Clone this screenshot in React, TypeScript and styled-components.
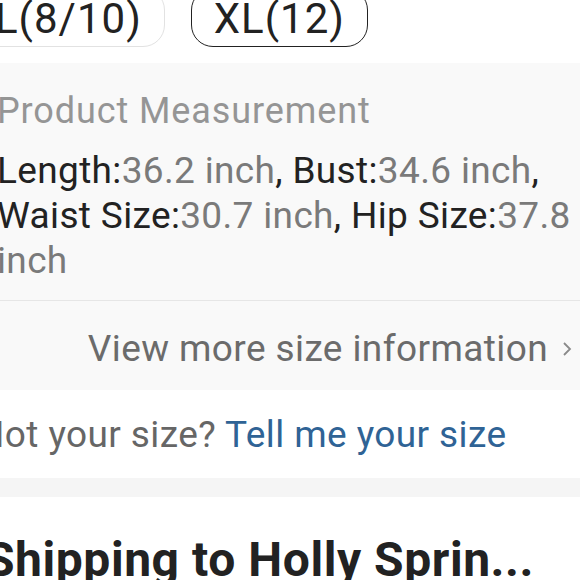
import React from "react";
import styled, { createGlobalStyle } from "styled-components";

const GlobalStyle = createGlobalStyle`
  html, body {
    margin: 0;
    padding: 0;
    background: #ffffff;
    overflow: hidden;
  }
  body {
    font-family: Roboto, "Noto Sans", Arial, sans-serif;
    -webkit-font-smoothing: antialiased;
  }
`;

const Page = styled.div`
  width: 620px;
  margin-left: -20px;
  margin-top: -12px;
  color: #222222;
`;

const ChipRow = styled.div`
  display: flex;
  gap: 26px;
  margin-left: -8px;
  height: 59px;
`;

const Chip = styled.div<{ $active?: boolean }>`
  box-sizing: border-box;
  height: 59px;
  padding: 3px 22px 0;
  display: flex;
  align-items: center;
  border-radius: 22px;
  border: ${({ $active }) => ($active ? "1.5px solid #222" : "1.5px solid #e2e2e2")};
  font-size: 42px;
  letter-spacing: 1px;
  line-height: 1;
  color: #222222;
`;

const Panel = styled.section`
  margin-top: 16px;
  background: #f9f9f9;
  padding-left: 17px;
  width: 583px;
`;

const Measure = styled.div`
  padding: 26px 0 17px;
  border-bottom: 1px solid #e6e6e6;
`;

const MeasureTitle = styled.div`
  font-size: 36px;
  letter-spacing: 0.9px;
  line-height: 44px;
  color: #959595;
  margin-bottom: 15px;
`;

const MeasureText = styled.div`
  font-size: 37px;
  letter-spacing: 0.35px;
  line-height: 45px;
  color: #222222;
  padding-right: 6px;
`;

const Value = styled.span`
  color: #7a7a7a;
`;

const MoreRow = styled.div`
  height: 89px;
  display: flex;
  align-items: center;
  justify-content: flex-end;
  gap: 14px;
  padding: 6px 8px 0 0;
  box-sizing: border-box;
  font-size: 37px;
  letter-spacing: 0.4px;
  color: #6b6b6b;
`;

const Chevron = styled.svg`
  width: 10px;
  height: 18px;
`;

const SizeHelp = styled.div`
  height: 88px;
  display: flex;
  align-items: center;
  margin-left: -2px;
  font-size: 37px;
  letter-spacing: 0.4px;
  color: #666666;
`;

const HelpLink = styled.span`
  color: #2f6395;
  margin-left: 9px;
`;

const Band = styled.div`
  height: 19px;
  background: #f5f5f5;
`;

const Shipping = styled.h2`
  margin: 0;
  padding: 34px 0 0 5px;
  font-size: 48px;
  font-weight: 700;
  letter-spacing: 0.55px;
  line-height: 58px;
  color: #222222;
  white-space: nowrap;
`;

const App = () => {
  return (
    <>
      <GlobalStyle />
      <Page>
        <ChipRow>
          <Chip>L(8/10)</Chip>
          <Chip $active>XL(12)</Chip>
        </ChipRow>
        <Panel>
          <Measure>
            <MeasureTitle>Product Measurement</MeasureTitle>
            <MeasureText>
              Length:<Value>36.2 inch</Value>, Bust:<Value>34.6 inch</Value>,
              Waist Size:<Value>30.7 inch</Value>, Hip Size:<Value>37.8 inch</Value>
            </MeasureText>
          </Measure>
          <MoreRow>
            View more size information
            <Chevron viewBox="0 0 10 18" fill="none">
              <path d="M2 3l6 6-6 6" stroke="#8a8a8a" strokeWidth="1.8" />
            </Chevron>
          </MoreRow>
        </Panel>
        <SizeHelp>
          Not your size?<HelpLink>Tell me your size</HelpLink>
        </SizeHelp>
        <Band />
        <Shipping>Shipping to Holly Sprin...</Shipping>
      </Page>
    </>
  );
};

export default App;
